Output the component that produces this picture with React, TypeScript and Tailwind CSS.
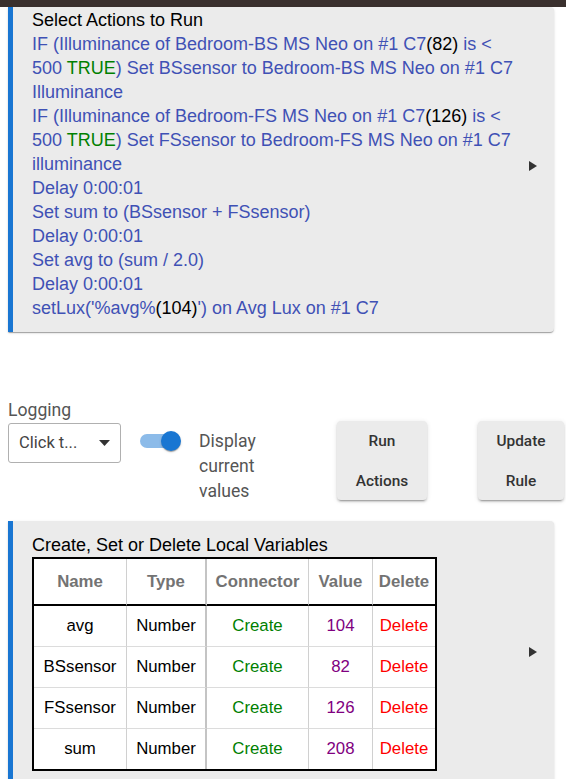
import React from "react";

const ARIAL = "font-['Liberation_Sans',Arial,sans-serif]";
const ROBOTO = "font-['Roboto',sans-serif]";
const CARD_SHADOW =
  "shadow-[0_2px_1px_-1px_rgba(0,0,0,0.2),0_1px_1px_0_rgba(0,0,0,0.14),0_1px_3px_0_rgba(0,0,0,0.12)]";
const BTN_SHADOW =
  "shadow-[0_3px_1px_-2px_rgba(0,0,0,0.2),0_2px_2px_0_rgba(0,0,0,0.14),0_1px_5px_0_rgba(0,0,0,0.12)]";

function Arrow() {
  return (
    <svg width="8" height="10" viewBox="0 0 8 10" className="shrink-0">
      <polygon points="0,0 8,5 0,10" fill="#333" />
    </svg>
  );
}

const K = ({ children }: { children: React.ReactNode }) => (
  <span className="text-black">{children}</span>
);
const G = ({ children }: { children: React.ReactNode }) => (
  <span className="text-[#008000]">{children}</span>
);

const actionLines: React.ReactNode[] = [
  <>
    IF (Illuminance of Bedroom-BS MS Neo on #1 C7<K>(82)</K> is &lt;
  </>,
  <>
    500 <G>TRUE</G>) Set BSsensor to Bedroom-BS MS Neo on #1 C7
  </>,
  <>Illuminance</>,
  <>
    IF (Illuminance of Bedroom-FS MS Neo on #1 C7<K>(126)</K> is &lt;
  </>,
  <>
    500 <G>TRUE</G>) Set FSsensor to Bedroom-FS MS Neo on #1 C7
  </>,
  <>illuminance</>,
  <>Delay 0:00:01</>,
  <>Set sum to (BSsensor + FSsensor)</>,
  <>Delay 0:00:01</>,
  <>Set avg to (sum / 2.0)</>,
  <>Delay 0:00:01</>,
  <>
    setLux('%avg%<K>(104)</K>') on Avg Lux on #1 C7
  </>,
];

const variables = [
  { name: "avg", value: "104" },
  { name: "BSsensor", value: "82" },
  { name: "FSsensor", value: "126" },
  { name: "sum", value: "208" },
];

const colW = ["w-[93px]", "w-[80px]", "w-[102px]", "w-[64px]", "w-[62px]"];
const colBorder = [
  "border-r border-r-[#d0d0d0]",
  "border-r-2 border-r-[#c4c4c4]",
  "border-r border-r-[#d0d0d0]",
  "border-r border-r-[#d0d0d0]",
  "",
];

function VariablesTable() {
  const heads = ["Name", "Type", "Connector", "Value", "Delete"];
  return (
    <table className="table-fixed border-separate border-spacing-0 border-2 border-black bg-white w-[405px] text-[16.8px]">
      <thead>
        <tr>
          {heads.map((h, i) => (
            <th
              key={h}
              className={`${colW[i]} ${colBorder[i]} h-[47px] p-0 border-b-2 border-b-black font-bold text-[#737373] text-center`}
            >
              {h}
            </th>
          ))}
        </tr>
      </thead>
      <tbody>
        {variables.map((v, r) => {
          const last = r === variables.length - 1;
          const rowB = last ? "h-[40px]" : "h-[41px] border-b border-b-[#dcdcdc]";
          return (
            <tr key={v.name}>
              <td className={`${colBorder[0]} ${rowB} p-0 text-center text-black`}>{v.name}</td>
              <td className={`${colBorder[1]} ${rowB} p-0 text-center text-black`}>Number</td>
              <td className={`${colBorder[2]} ${rowB} p-0 text-center text-[#008000]`}>Create</td>
              <td className={`${colBorder[3]} ${rowB} p-0 text-center text-[#800080]`}>{v.value}</td>
              <td className={`${rowB} p-0 text-center text-[#ff0000]`}>Delete</td>
            </tr>
          );
        })}
      </tbody>
    </table>
  );
}

export default function App() {
  return (
    <div className="min-h-[779px] bg-white overflow-hidden">
      <div className="h-[7px] bg-[#3a302e]" />

      {/* actions card */}
      <div
        className={`ml-2 w-[546px] flex items-center bg-[#ebebeb] border-l-[5px] border-[#1976d2] rounded-r-[4px] pt-[1px] pb-3 ${CARD_SHADOW} ${ARIAL}`}
      >
        <div className="flex-1 pl-[19px] text-[18px] leading-6 text-[#3f51b5] whitespace-nowrap">
          <div className="text-black">Select Actions to Run</div>
          {actionLines.map((l, i) => (
            <div key={i}>{l}</div>
          ))}
        </div>
        <div className="pr-[17px] pt-[4px]">
          <Arrow />
        </div>
      </div>

      {/* controls row */}
      <div className={`flex items-start pl-2 mt-[66px] h-[123px] ${ROBOTO}`}>
        <div className="w-[113px]">
          <div className="h-[25px] leading-[25px] text-[17.6px] text-[#555]">Logging</div>
          <div className="h-[40px] flex items-center justify-between border border-[#b0b0b0] rounded-[3px] pl-[10px] pr-[10px] text-[16.5px] text-[#444]">
            <span>Click t...</span>
            <svg width="11" height="6" viewBox="0 0 11 6">
              <polygon points="0,0 11,0 5.5,6" fill="#333" />
            </svg>
          </div>
        </div>

        <div className="ml-[19px] mt-[33px] relative w-[41px] h-[20px]">
          <div className="absolute left-0 top-[3px] w-[34px] h-[14px] rounded-full bg-[#8cbbe9]" />
          <div className="absolute left-[21px] top-0 w-[20px] h-[20px] rounded-full bg-[#1976d2] shadow-[0_2px_1px_-1px_rgba(0,0,0,0.2),0_1px_1px_0_rgba(0,0,0,0.14),0_1px_3px_0_rgba(0,0,0,0.12)]" />
        </div>

        <div className="ml-[18px] mt-[31px] w-[138px] text-[17.6px] leading-[25px] text-[#555]">
          Display
          <br />
          current
          <br />
          values
        </div>

        <button
          className={`mt-[23px] w-[90px] h-[79px] bg-[#ebebeb] rounded-[4px] text-[15.4px] font-medium leading-[40px] text-[#333] ${BTN_SHADOW}`}
        >
          Run
          <br />
          Actions
        </button>
        <button
          className={`ml-[51px] mt-[23px] w-[86px] h-[79px] bg-[#ebebeb] rounded-[4px] text-[15.4px] font-medium leading-[40px] text-[#333] ${BTN_SHADOW}`}
        >
          Update
          <br />
          Rule
        </button>
      </div>

      {/* variables card */}
      <div
        className={`ml-2 w-[546px] flex items-center bg-[#ebebeb] border-l-[5px] border-[#1976d2] rounded-r-[4px] pt-3 pb-5 ${CARD_SHADOW} ${ARIAL}`}
      >
        <div className="flex-1 pl-[19px]">
          <div className="text-[18px] leading-6 text-black">
            Create, Set or Delete Local Variables
          </div>
          <VariablesTable />
        </div>
        <div className="pr-[17px]">
          <Arrow />
        </div>
      </div>
    </div>
  );
}
